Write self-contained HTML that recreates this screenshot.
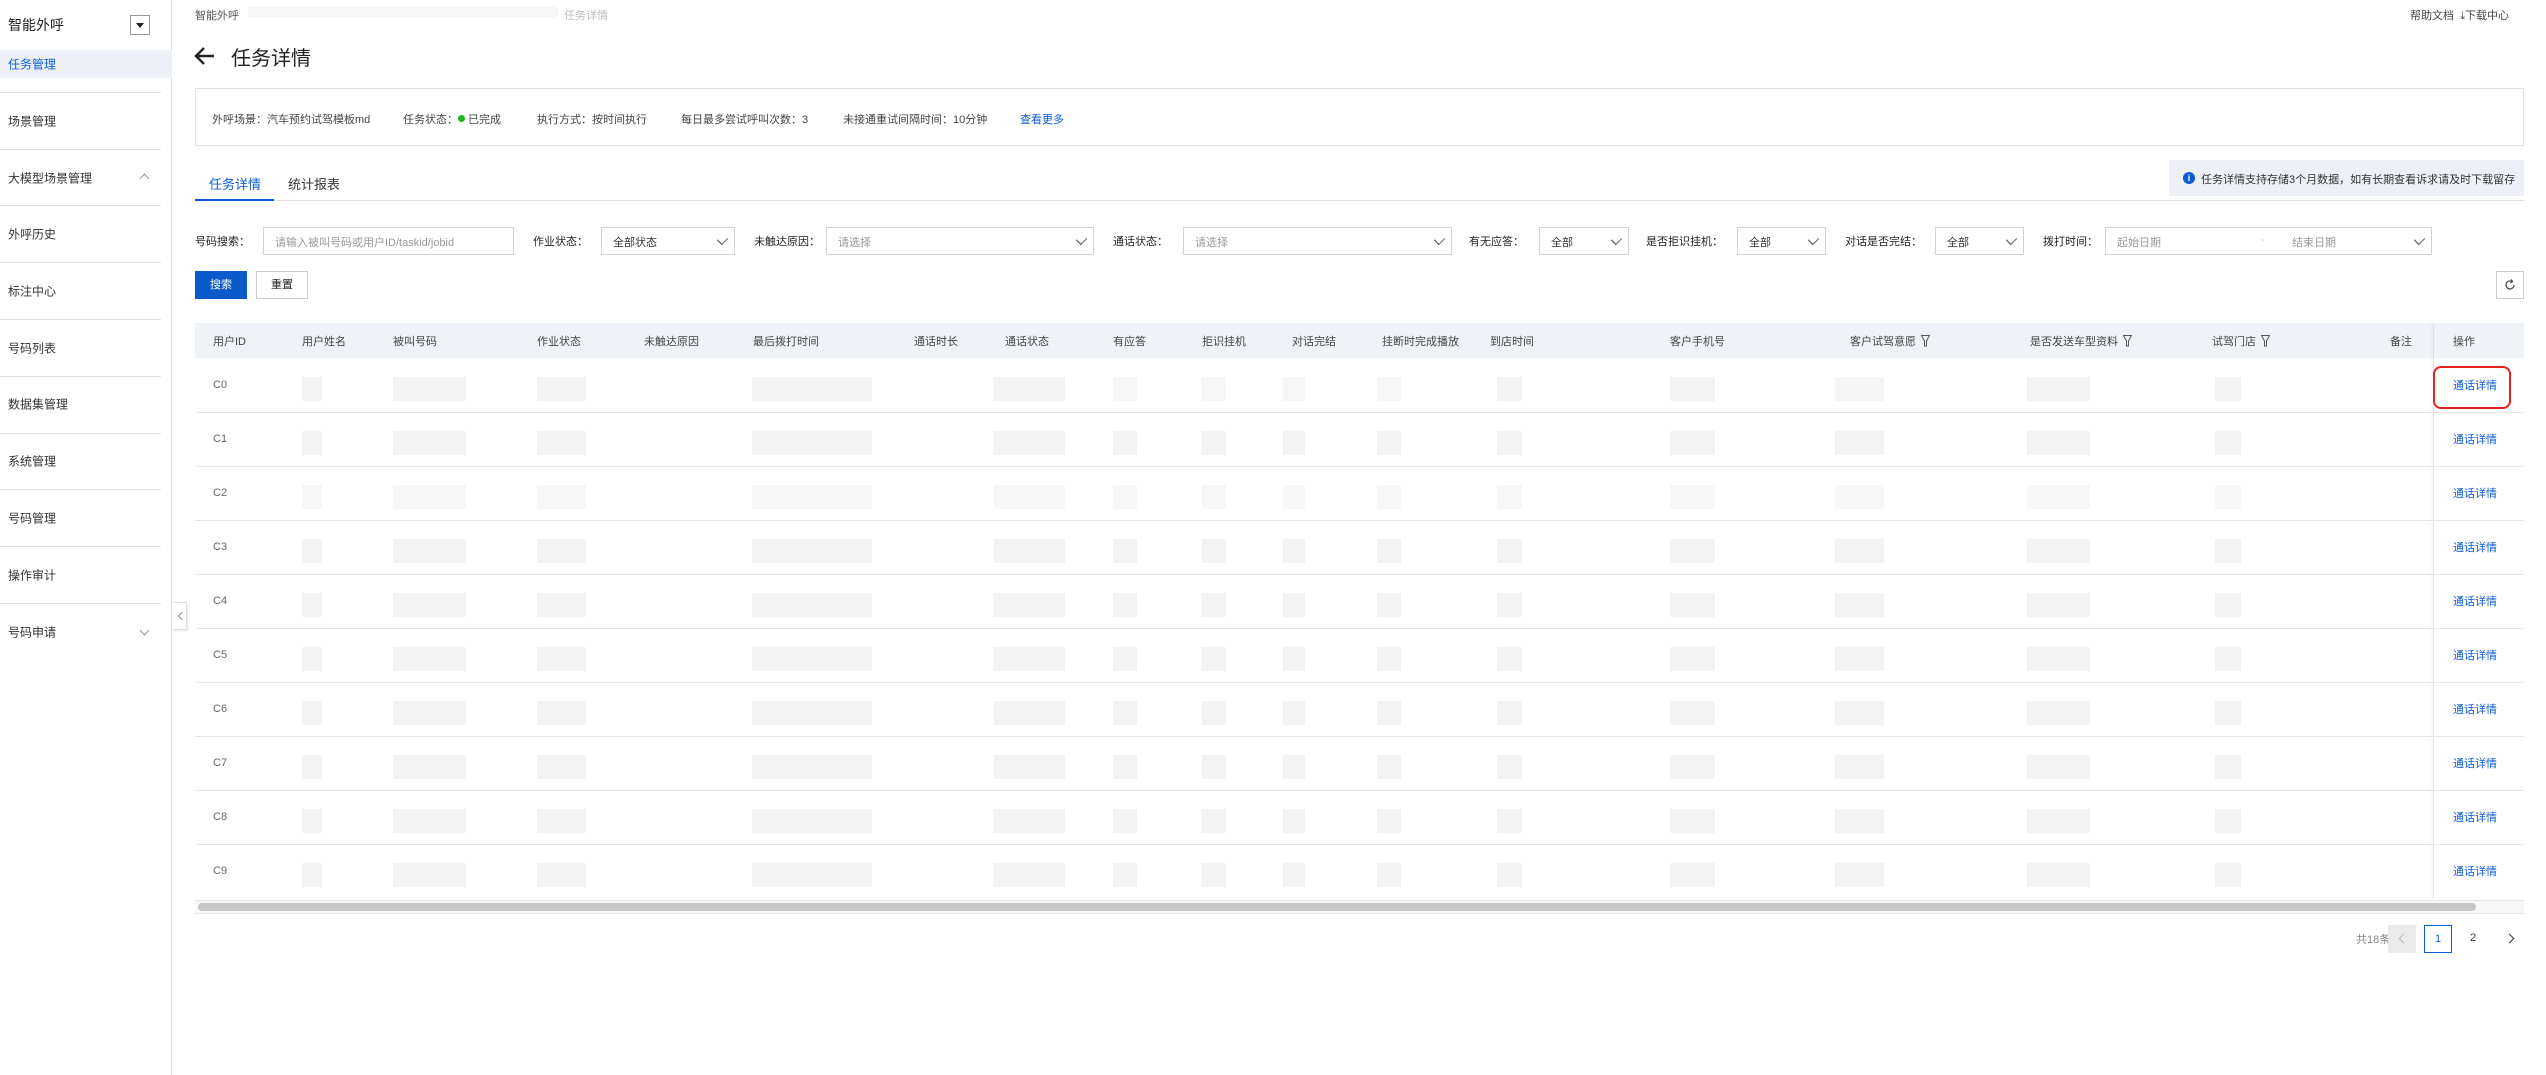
<!DOCTYPE html>
<html><head><meta charset="utf-8">
<style>
*{margin:0;padding:0;box-sizing:border-box}
body{width:2546px;height:1075px;position:relative;background:#fff;font-family:"Liberation Sans","Noto Sans CJK SC",sans-serif;color:#333;font-size:12px;overflow:hidden}
.a{position:absolute;white-space:nowrap}
.sep{position:absolute;left:0;width:161px;height:1px;background:#e3e3e3}
.si{position:absolute;left:8px;font-size:12px;color:#333;transform:translateY(-50%)}
.lbl{position:absolute;top:241px;transform:translateY(-50%);font-size:11px;color:#222}
.box{position:absolute;top:227px;height:28px;border:1px solid #d0d3d8;background:#fff}
.box span{position:absolute;left:11px;top:6px;font-size:11px;color:#999}
.box i{position:absolute;right:8px;top:8px;width:7px;height:7px;border-right:1px solid #666;border-bottom:1px solid #666;transform:rotate(45deg) scaleY(1.3)}
.th{position:absolute;top:341px;transform:translateY(-50%);font-size:11px;color:#444}
.rl{position:absolute;left:195px;width:2238px;height:1px;background:#e6e6e6}
.bk{position:absolute;height:24px;background:#f3f3f3}
.cid{position:absolute;left:213px;font-size:11px;color:#666;transform:translateY(-50%)}
.op{position:absolute;left:2453px;font-size:11px;color:#0a5bd6;transform:translateY(-50%)}
.th svg{margin-left:5px;vertical-align:-2px}
</style></head><body>
<div class="a" style="left:0;top:0;width:172px;height:1075px;border-right:1px solid #d6d8dc;background:#fff"></div>
<div class="a" style="left:8px;top:15px;font-size:14px;color:#222;">智能外呼</div>
<div class="a" style="left:130px;top:15px;width:20px;height:20px;border:1px solid #999;background:#fff"></div>
<div class="a" style="left:136px;top:23px;width:0;height:0;border-left:4px solid transparent;border-right:4px solid transparent;border-top:5px solid #222"></div>
<div class="a" style="left:0;top:50px;width:172px;height:28px;background:#edf1f7"></div>
<div class="si" style="top:64px;color:#0a5bd6">任务管理</div>
<div class="sep" style="top:92px"></div>
<div class="si" style="top:121px">场景管理</div>
<div class="sep" style="top:149px"></div>
<div class="si" style="top:178px">大模型场景管理</div>
<div class="a" style="left:141px;top:175px;width:7px;height:7px;border-left:1px solid #999;border-top:1px solid #999;transform:rotate(45deg)"></div>
<div class="sep" style="top:205px"></div>
<div class="si" style="top:234px">外呼历史</div>
<div class="sep" style="top:262px"></div>
<div class="si" style="top:291px">标注中心</div>
<div class="sep" style="top:319px"></div>
<div class="si" style="top:348px">号码列表</div>
<div class="sep" style="top:376px"></div>
<div class="si" style="top:404px">数据集管理</div>
<div class="sep" style="top:433px"></div>
<div class="si" style="top:461px">系统管理</div>
<div class="sep" style="top:489px"></div>
<div class="si" style="top:518px">号码管理</div>
<div class="sep" style="top:546px"></div>
<div class="si" style="top:575px">操作审计</div>
<div class="sep" style="top:603px"></div>
<div class="si" style="top:632px">号码申请</div>
<div class="a" style="left:141px;top:627px;width:7px;height:7px;border-right:1px solid #999;border-bottom:1px solid #999;transform:rotate(45deg)"></div>
<div class="a" style="left:173px;top:602px;width:14px;height:28px;border:1px solid #ddd;border-left:none;background:#fff;box-shadow:1px 1px 2px rgba(0,0,0,.1)"></div>
<div class="a" style="left:179px;top:613px;width:6px;height:6px;border-left:1px solid #888;border-bottom:1px solid #888;transform:rotate(45deg)"></div>

<div class="a" style="left:195px;top:7px;font-size:11px;color:#555">智能外呼</div>
<div class="a" style="left:248px;top:6px;width:310px;height:12px;background:#f7f7f7"></div>
<div class="a" style="left:564px;top:7px;font-size:11px;color:#bbb">任务详情</div>
<div class="a" style="left:2410px;top:7px;font-size:11px;color:#444">帮助文档 &nbsp;⤓下载中心</div>

<svg class="a" style="left:194px;top:46px" width="22" height="20" viewBox="0 0 22 20"><path d="M20 10H3M10 2L2 10l8 8" fill="none" stroke="#222" stroke-width="2.4"/></svg>
<div class="a" style="left:231px;top:42px;font-size:20px;color:#222">任务详情</div>

<div class="a" style="left:195px;top:88px;width:2329px;height:58px;border:1px solid #e3e3e3"></div>
<div class="a" style="left:212px;top:111px;font-size:11px;color:#444">外呼场景：汽车预约试驾模板md</div>
<div class="a" style="left:403px;top:111px;font-size:11px;color:#444">任务状态：<span style="display:inline-block;width:7px;height:7px;border-radius:50%;background:#1cb41c;vertical-align:1px"></span> 已完成</div>
<div class="a" style="left:537px;top:111px;font-size:11px;color:#444">执行方式：按时间执行</div>
<div class="a" style="left:681px;top:111px;font-size:11px;color:#444">每日最多尝试呼叫次数：3</div>
<div class="a" style="left:843px;top:111px;font-size:11px;color:#444">未接通重试间隔时间：10分钟</div>
<div class="a" style="left:1020px;top:111px;font-size:11px;color:#0a5bd6">查看更多</div>

<div class="a" style="left:209px;top:174px;font-size:13px;color:#0a5bd6">任务详情</div>
<div class="a" style="left:288px;top:174px;font-size:13px;color:#333">统计报表</div>
<div class="a" style="left:195px;top:200px;width:2329px;height:1px;background:#e0e0e0"></div>
<div class="a" style="left:195px;top:199px;width:79px;height:2px;background:#0a5bd6"></div>
<div class="a" style="left:2169px;top:160px;width:355px;height:36px;background:#edf1f7"></div>
<div class="a" style="left:2183px;top:172px;width:12px;height:12px;border-radius:50%;background:#0a5bd6;color:#fff;font-size:9px;font-weight:bold;text-align:center;line-height:12px">i</div>
<div class="a" style="left:2201px;top:171px;font-size:11px;color:#333">任务详情支持存储3个月数据，如有长期查看诉求请及时下载留存</div>

<div class="lbl" style="left:195px">号码搜索：</div>
<div class="box" style="left:263px;width:251px"><span>请输入被叫号码或用户ID/taskid/jobid</span></div>
<div class="lbl" style="left:533px">作业状态：</div>
<div class="box" style="left:601px;width:134px"><span style="color:#333">全部状态</span><i></i></div>
<div class="lbl" style="left:754px">未触达原因：</div>
<div class="box" style="left:826px;width:268px"><span>请选择</span><i></i></div>
<div class="lbl" style="left:1113px">通话状态：</div>
<div class="box" style="left:1183px;width:269px"><span>请选择</span><i></i></div>
<div class="lbl" style="left:1469px">有无应答：</div>
<div class="box" style="left:1539px;width:90px"><span style="color:#333">全部</span><i></i></div>
<div class="lbl" style="left:1646px">是否拒识挂机：</div>
<div class="box" style="left:1737px;width:89px"><span style="color:#333">全部</span><i></i></div>
<div class="lbl" style="left:1845px">对话是否完结：</div>
<div class="box" style="left:1935px;width:89px"><span style="color:#333">全部</span><i></i></div>
<div class="lbl" style="left:2043px">拨打时间：</div>
<div class="box" style="left:2105px;width:327px"><span>起始日期</span><span style="left:155px;color:#ccc">-</span><span style="left:186px">结束日期</span><i></i></div>

<div class="a" style="left:195px;top:271px;width:52px;height:28px;background:#0a5bc9;color:#fff;font-size:11px;text-align:center;line-height:28px">搜索</div>
<div class="a" style="left:256px;top:271px;width:52px;height:28px;border:1px solid #ccc;font-size:11px;text-align:center;line-height:26px;color:#222">重置</div>
<div class="a" style="left:2496px;top:271px;width:28px;height:28px;border:1px solid #ccc"></div>
<svg class="a" style="left:2503px;top:278px" width="14" height="14" viewBox="0 0 14 14"><path d="M11 7a4 4 0 1 1-2-3.5" fill="none" stroke="#444" stroke-width="1.2"/><path d="M8 1.5l1.5 2L7.5 5" fill="none" stroke="#444" stroke-width="1.2"/></svg>

<div class="a" style="left:195px;top:323px;width:2329px;height:35px;background:#eff2f7"></div>
<div class="th" style="left:213px">用户ID</div>
<div class="th" style="left:302px">用户姓名</div>
<div class="th" style="left:393px">被叫号码</div>
<div class="th" style="left:537px">作业状态</div>
<div class="th" style="left:644px">未触达原因</div>
<div class="th" style="left:753px">最后拨打时间</div>
<div class="th" style="left:914px">通话时长</div>
<div class="th" style="left:1005px">通话状态</div>
<div class="th" style="left:1113px">有应答</div>
<div class="th" style="left:1202px">拒识挂机</div>
<div class="th" style="left:1292px">对话完结</div>
<div class="th" style="left:1382px">挂断时完成播放</div>
<div class="th" style="left:1490px">到店时间</div>
<div class="th" style="left:1670px">客户手机号</div>
<div class="th" style="left:1850px">客户试驾意愿<svg width="9" height="12" viewBox="0 0 9 12"><path d="M0.5 0.5h8L5.5 6v5h-2V6z" fill="none" stroke="#555"/></svg></div>
<div class="th" style="left:2030px">是否发送车型资料<svg width="9" height="12" viewBox="0 0 9 12"><path d="M0.5 0.5h8L5.5 6v5h-2V6z" fill="none" stroke="#555"/></svg></div>
<div class="th" style="left:2212px">试驾门店<svg width="9" height="12" viewBox="0 0 9 12"><path d="M0.5 0.5h8L5.5 6v5h-2V6z" fill="none" stroke="#555"/></svg></div>
<div class="th" style="left:2390px">备注</div>
<div class="th" style="left:2453px">操作</div>
<div class="a" style="left:2433px;top:323px;width:1px;height:575px;background:#e0e0e0;box-shadow:-2px 0 3px rgba(0,0,0,.06)"></div>

<div class="rl" style="top:412px"></div><div class="rl" style="top:466px"></div><div class="rl" style="top:520px"></div><div class="rl" style="top:574px"></div><div class="rl" style="top:628px"></div><div class="rl" style="top:682px"></div><div class="rl" style="top:736px"></div><div class="rl" style="top:790px"></div><div class="rl" style="top:844px"></div>
<div class="a" style="left:2434px;top:412px;width:90px;height:1px;background:#e6e6e6;box-shadow:0 54px #e6e6e6,0 108px #e6e6e6,0 162px #e6e6e6,0 216px #e6e6e6,0 270px #e6e6e6,0 324px #e6e6e6,0 378px #e6e6e6,0 432px #e6e6e6"></div>

<div class="cid" style="top:385px">C0</div><div class="cid" style="top:439px">C1</div><div class="cid" style="top:493px">C2</div><div class="cid" style="top:547px">C3</div><div class="cid" style="top:601px">C4</div><div class="cid" style="top:655px">C5</div><div class="cid" style="top:709px">C6</div><div class="cid" style="top:763px">C7</div><div class="cid" style="top:817px">C8</div><div class="cid" style="top:871px">C9</div>
<div class="op" style="top:385px">通话详情</div><div class="op" style="top:439px">通话详情</div><div class="op" style="top:493px">通话详情</div><div class="op" style="top:547px">通话详情</div><div class="op" style="top:601px">通话详情</div><div class="op" style="top:655px">通话详情</div><div class="op" style="top:709px">通话详情</div><div class="op" style="top:763px">通话详情</div><div class="op" style="top:817px">通话详情</div><div class="op" style="top:871px">通话详情</div>
<div class="a" style="left:2433px;top:366px;width:78px;height:43px;border:2px solid #e42222;border-radius:8px"></div>

<div class="a" style="left:0;top:0">
<style>.bk{box-shadow:0 54px #f3f3f3,0 108px #f7f7f7,0 162px #f3f3f3,0 216px #f3f3f3,0 270px #f3f3f3,0 324px #f3f3f3,0 378px #f3f3f3,0 432px #f3f3f3,0 486px #f3f3f3}</style>
<div class="bk" style="left:302px;top:377px;width:20px"></div>
<div class="bk" style="left:393px;top:377px;width:73px"></div>
<div class="bk" style="left:537px;top:377px;width:49px"></div>
<div class="bk" style="left:752px;top:377px;width:120px"></div>
<div class="bk" style="left:994px;top:377px;width:71px"></div>
<div class="bk" style="left:1113px;top:377px;width:24px;background:#f6f6f6"></div>
<div class="bk" style="left:1202px;top:377px;width:24px;background:#f6f6f6"></div>
<div class="bk" style="left:1283px;top:377px;width:22px;background:#f6f6f6"></div>
<div class="bk" style="left:1377px;top:377px;width:24px;background:#f6f6f6"></div>
<div class="bk" style="left:1497px;top:377px;width:25px"></div>
<div class="bk" style="left:1670px;top:377px;width:45px"></div>
<div class="bk" style="left:1835px;top:377px;width:49px;background:#f5f5f5"></div>
<div class="bk" style="left:2027px;top:377px;width:63px"></div>
<div class="bk" style="left:2215px;top:377px;width:26px"></div>
</div>

<div class="a" style="left:195px;top:900px;width:2329px;height:14px;background:#f7f7f7;border-top:1px solid #e6e6e6;border-bottom:1px solid #e6e6e6"></div>
<div class="a" style="left:198px;top:903px;width:2278px;height:8px;background:#c6c6c6;border-radius:4px"></div>

<div class="a" style="left:2356px;top:931px;font-size:11px;color:#888">共18条</div>
<div class="a" style="left:2388px;top:925px;width:28px;height:28px;background:#eaeaea"></div>
<div class="a" style="left:2400px;top:935px;width:7px;height:7px;border-left:1px solid #bbb;border-bottom:1px solid #bbb;transform:rotate(45deg)"></div>
<div class="a" style="left:2424px;top:925px;width:28px;height:28px;border:1px solid #0a5bd6;color:#0a5bd6;font-size:11px;text-align:center;line-height:26px">1</div>
<div class="a" style="left:2470px;top:932px;font-size:11px;color:#333">2</div>
<div class="a" style="left:2506px;top:935px;width:7px;height:7px;border-right:1px solid #333;border-top:1px solid #333;transform:rotate(45deg)"></div>
</body></html>
